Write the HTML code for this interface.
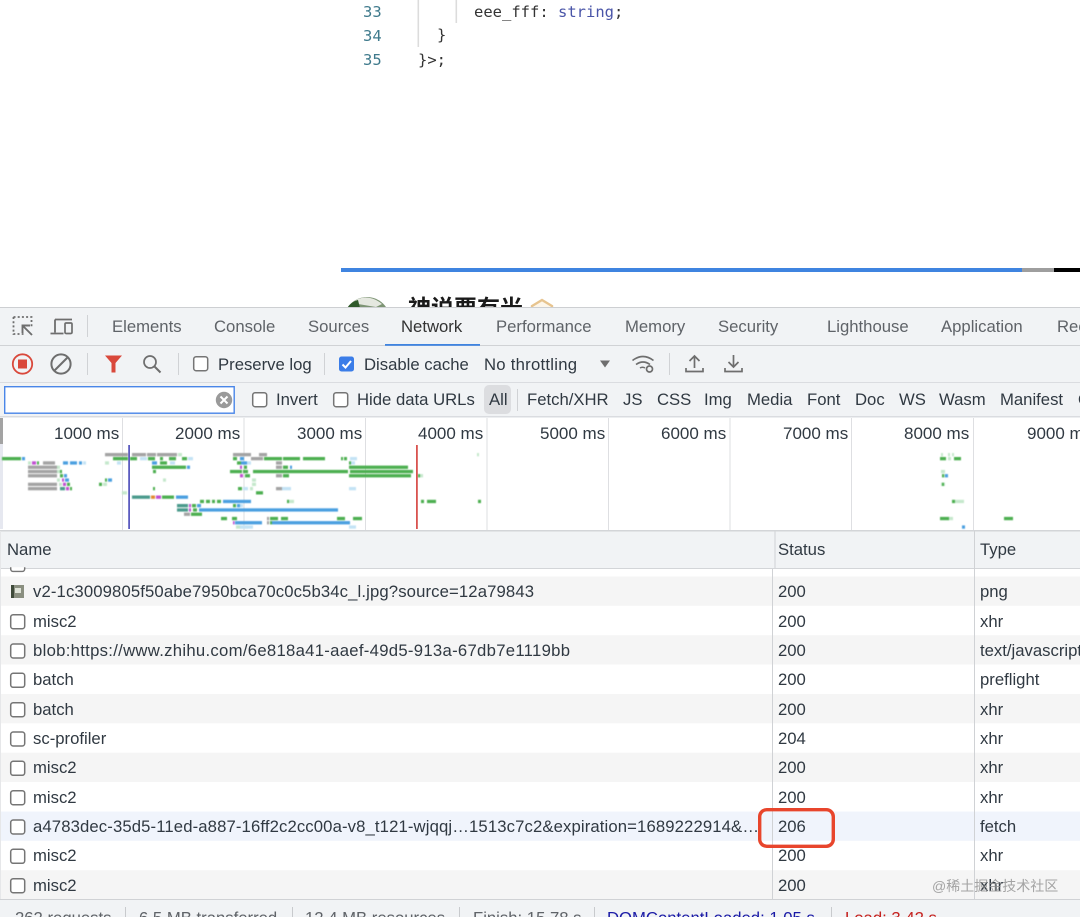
<!DOCTYPE html>
<html><head><meta charset="utf-8"><style>
html,body{margin:0;padding:0;background:#fff;width:1080px;height:917px;overflow:hidden}
svg{display:block}
text{font-family:"Liberation Sans","Noto Sans CJK SC",sans-serif;font-size:16.7px;fill:#303942}
.l{font-size:17px}
.m{font-family:"DejaVu Sans Mono","Liberation Mono",monospace;font-size:15.5px;fill:#333}
.n{font-family:"DejaVu Sans Mono","Liberation Mono",monospace;font-size:15.5px;fill:#3f7a8c}
.t{fill:#5f6368}
.g{fill:#4caf50}.b{fill:#4a9fe0}.y{fill:#a3a3a3}.p{fill:#c04fd0}.e{fill:#4a9a8c}.o{fill:#e08a30}
.lg{fill:#c5e8cc}.lb{fill:#c3e3f5}
.ic{fill:none;stroke:#6e6e6e;stroke-width:1.7}
.cb{fill:#fff;stroke:#757575;stroke-width:1.5}
</style></head><body>
<svg width="1080" height="917" viewBox="0 0 1080 917" xmlns="http://www.w3.org/2000/svg">
<rect width="1080" height="917" fill="#fff"/>
<!-- code -->
<rect x="417.5" y="0" width="1.6" height="47" fill="#dcdcdc"/>
<rect x="455.5" y="0" width="1.6" height="23" fill="#dcdcdc"/>
<text class="n" x="363" y="17">33</text>
<text class="n" x="363" y="41">34</text>
<text class="n" x="363" y="65">35</text>
<text class="m" x="474" y="17">eee_fff: <tspan fill="#4a55a8">string</tspan>;</text>
<text class="m" x="437" y="40">}</text>
<text class="m" x="418" y="65">}&gt;;</text>
<!-- progress -->
<rect x="341" y="268" width="681" height="4" fill="#3f84e0"/>
<rect x="1022" y="268" width="32" height="4" fill="#9e9e9e"/>
<rect x="1054" y="268" width="26" height="4" fill="#000"/>
<!-- article peek -->
<circle cx="367" cy="320" r="23" fill="#7d9474"/>
<path d="M352 303q8-7 18-5q6 1 12 6l-6 3l-12-2z" fill="#e5e8e0"/>
<path d="M347 308q5-7 11-8l2 8z" fill="#2f5a2a"/>
<text x="408" y="316" style="font-size:23px;font-weight:bold;fill:#1a1a1a">神说要有光</text>
<path d="M532 315v-9l10-6l10 6v9" fill="#fdf6ea" stroke="#e7c48f" stroke-width="2.4"/>
<!-- devtools chrome -->
<rect x="0" y="307" width="1080" height="110" fill="#f1f3f5"/>
<rect x="0" y="307" width="1080" height="1" fill="#cdcfd2"/>
<rect x="0" y="345" width="1080" height="1" fill="#d0d2d5"/>
<rect x="0" y="382" width="1080" height="1" fill="#dadce0"/>
<rect x="0" y="416" width="1080" height="1.5" fill="#dadce0"/>
<!-- tab icons -->
<path d="M13.5 317h18v10M13.5 317v17h10" fill="none" stroke="#6e6e6e" stroke-width="1.8" stroke-dasharray="2 2.2"/>
<path d="M32 335l-9-9M22.5 333v-7.5h7.5" fill="none" stroke="#6e6e6e" stroke-width="1.9"/>
<path d="M55 319.5h17M55 319.5v13M50.5 333.5h13" fill="none" stroke="#6e6e6e" stroke-width="1.8"/>
<rect x="65" y="323" width="7" height="10.5" rx="1.2" fill="#f1f3f5" stroke="#6e6e6e" stroke-width="1.7"/>
<rect x="87" y="315" width="1" height="22" fill="#d0d2d5"/>
<!-- tabs -->
<text class="t" x="112" y="332">Elements</text>
<text class="t" x="214" y="332">Console</text>
<text class="t" x="308" y="332">Sources</text>
<text x="401" y="332" style="fill:#333">Network</text>
<text class="t" x="496" y="332">Performance</text>
<text class="t" x="625" y="332">Memory</text>
<text class="t" x="718" y="332">Security</text>
<text class="t" x="827" y="332">Lighthouse</text>
<text class="t" x="941" y="332">Application</text>
<text class="t" x="1057" y="332">Recorder</text>
<rect x="385" y="344" width="95" height="1.8" fill="#3f84e0"/>
<!-- toolbar -->
<circle cx="22.5" cy="364" r="9.7" fill="none" stroke="#d9483b" stroke-width="1.8"/>
<rect x="18" y="359.5" width="9" height="9" fill="#d9483b"/>
<circle cx="61" cy="364" r="9.6" class="ic" style="stroke-width:2"/>
<path d="M54.500 370.500L67.500 357.500" class="ic" style="stroke-width:2"/>
<rect x="87" y="353" width="1" height="22" fill="#d0d2d5"/>
<path d="M105 355.500h17l-6.500 7.500v9.500h-4v-9.500z" fill="#d9483b"/>
<circle cx="150" cy="362" r="6" class="ic"/>
<path d="M154.500 366.500l6 6" class="ic" style="stroke-width:2"/>
<rect x="178" y="353" width="1" height="22" fill="#d0d2d5"/>
<rect x="193.700" y="356.700" width="14" height="14" rx="2.500" class="cb"/>
<text x="218" y="370">Preserve log</text>
<rect x="324" y="353" width="1" height="22" fill="#d0d2d5"/>
<rect x="339" y="356.500" width="15" height="15" rx="2.500" fill="#3b7de8"/>
<path d="M342.500 364.500l3 3l5.500-6.500" fill="none" stroke="#fff" stroke-width="2"/>
<text x="364" y="370">Disable cache</text>
<text x="484" y="370" textLength="93">No throttling</text>
<path d="M600 360.500h10l-5 7z" fill="#6e6e6e"/>
<path d="M632.500 360.500q10.500-8 21 0M636 364.500q7-5 14 0M640 368q2.500-1.500 5 0" fill="none" stroke="#6e6e6e" stroke-width="1.6"/>
<circle cx="649.500" cy="369" r="3" fill="#f1f3f5" stroke="#6e6e6e" stroke-width="1.7"/>
<rect x="669" y="353" width="1" height="22" fill="#d0d2d5"/>
<path d="M694.500 368v-12M689.500 361l5-5l5 5M686 368v3.500h17v-3.500" fill="none" stroke="#6e6e6e" stroke-width="1.7"/>
<path d="M733.500 355v12M728.500 362l5 5l5-5M725 368v3.500h17v-3.500" fill="none" stroke="#6e6e6e" stroke-width="1.7"/>
<!-- filter row -->
<rect x="4.700" y="386.700" width="229.500" height="26.500" fill="#fff" stroke="#4a86e8" stroke-width="1.400"/>
<circle cx="224" cy="400" r="8.200" fill="#9a9a9a"/>
<path d="M220.500 396.500l7 7M227.500 396.500l-7 7" stroke="#fff" stroke-width="2"/>
<rect x="252.700" y="392.700" width="14" height="14" rx="2.500" class="cb"/>
<text x="276" y="405">Invert</text>
<rect x="333.700" y="392.700" width="14" height="14" rx="2.500" class="cb"/>
<text x="357" y="405">Hide data URLs</text>
<rect x="484" y="385" width="27" height="29" rx="5" fill="#dcdde0"/>
<text x="489" y="405">All</text>
<rect x="517" y="389" width="1" height="22" fill="#d0d2d5"/>
<text x="527" y="405">Fetch/XHR</text>
<text x="623" y="405">JS</text>
<text x="657" y="405">CSS</text>
<text x="704" y="405">Img</text>
<text x="747" y="405">Media</text>
<text x="807" y="405">Font</text>
<text x="855" y="405">Doc</text>
<text x="899" y="405">WS</text>
<text x="939" y="405">Wasm</text>
<text x="1000" y="405">Manifest</text>
<text x="1078" y="405">Other</text>
<!-- overview -->
<rect x="0" y="418" width="1080" height="112" fill="#fff"/>
<rect x="0" y="418" width="3" height="26" fill="#a3a3a3"/>
<rect x="0" y="444" width="3" height="85" fill="#e6e8f0"/>
<g fill="#dedfe2">
<rect x="122" y="418" width="1" height="112"/><rect x="243.500" y="418" width="1" height="112"/><rect x="365" y="418" width="1" height="112"/><rect x="486.500" y="418" width="1" height="112"/><rect x="608" y="418" width="1" height="112"/><rect x="729.500" y="418" width="1" height="112"/><rect x="851" y="418" width="1" height="112"/><rect x="973" y="418" width="1" height="112"/>
</g>
<text class="l" x="54" y="439">1000 ms</text>
<text class="l" x="175" y="439">2000 ms</text>
<text class="l" x="297" y="439">3000 ms</text>
<text class="l" x="418" y="439">4000 ms</text>
<text class="l" x="540" y="439">5000 ms</text>
<text class="l" x="661" y="439">6000 ms</text>
<text class="l" x="783" y="439">7000 ms</text>
<text class="l" x="904" y="439">8000 ms</text>
<text class="l" x="1027" y="439">9000 ms</text>
<!-- waterfall bars -->
<g style="filter:blur(.5px)">
<g class="y">
<rect x="105" y="453" width="23" height="3.300"/><rect x="132" y="453" width="14" height="3.300"/><rect x="147" y="453" width="9" height="3.300"/><rect x="157" y="453" width="20" height="3.300"/><rect x="233" y="453" width="18" height="3.300"/><rect x="259" y="453" width="8" height="3.300"/><rect x="251" y="457" width="12" height="3.300"/>
<rect x="43" y="461.300" width="12" height="3.300"/><rect x="276" y="461.300" width="6" height="3.300"/>
<rect x="28" y="465.600" width="29" height="3.300"/><rect x="276" y="465.600" width="6" height="3.300"/>
<rect x="28" y="469.900" width="29" height="3.300"/>
<rect x="28" y="474.100" width="29" height="3.300"/><rect x="276" y="474.100" width="6" height="3.300"/>
<rect x="28" y="482.700" width="29" height="3.300"/>
<rect x="28" y="487" width="29" height="3.300"/><rect x="276" y="487" width="6" height="3.300"/>
<rect x="184" y="512.600" width="6" height="3.300"/><rect x="267" y="516.900" width="2" height="3.300"/><rect x="267" y="521.100" width="2" height="3.300"/>
</g>
<g class="lg">
<rect x="178" y="453" width="4" height="3.300"/><rect x="477" y="453" width="2" height="3.300"/><rect x="941" y="453" width="2" height="3.300"/><rect x="948" y="453" width="2" height="3.300"/><rect x="952" y="453" width="2" height="3.300"/>
<rect x="28" y="461.300" width="3" height="3.300"/><rect x="105" y="461.300" width="4" height="3.300"/><rect x="57" y="465.600" width="3" height="3.300"/><rect x="57" y="469.900" width="3" height="3.300"/><rect x="57" y="478.400" width="3" height="3.300"/><rect x="163" y="478.400" width="3" height="3.300"/><rect x="103" y="482.700" width="4" height="3.300"/><rect x="59" y="482.700" width="3" height="3.300"/>
<rect x="122" y="491.200" width="5" height="3.300"/><rect x="252" y="478.400" width="4" height="3.300"/><rect x="252" y="482.700" width="4" height="3.300"/><rect x="250" y="487" width="3" height="3.300"/><rect x="418" y="474.100" width="5" height="3.300"/><rect x="955" y="499.800" width="9" height="3.300"/><rect x="948" y="516.900" width="5" height="3.300"/><rect x="287" y="499.800" width="7" height="3.300"/><rect x="236" y="525.400" width="12" height="3.300"/><rect x="942" y="474.100" width="3" height="3.300"/><rect x="941" y="482.700" width="4" height="3.300"/><rect x="948" y="457" width="3" height="3.300"/><rect x="941" y="469.900" width="4" height="3.300"/>
</g>
<g class="lb">
<rect x="83" y="461.300" width="3" height="3.300"/><rect x="117" y="461.300" width="4" height="3.300"/><rect x="188" y="457" width="5" height="3.300"/><rect x="350" y="457" width="7" height="3.300"/><rect x="349" y="461.300" width="6" height="3.300"/><rect x="247" y="461.300" width="4" height="3.300"/><rect x="349" y="487" width="7" height="3.300"/><rect x="243" y="487" width="5" height="3.300"/><rect x="282" y="487" width="9" height="3.300"/><rect x="240" y="525.400" width="13" height="3.300"/><rect x="349" y="525.400" width="7" height="3.300"/><rect x="240" y="504" width="3" height="3.300"/><rect x="140" y="457" width="7" height="3.300"/><rect x="170" y="461.300" width="5" height="3.300"/>
</g>
<g class="g">
<rect x="2" y="457" width="19" height="3.300"/><rect x="113" y="457" width="15" height="3.300"/><rect x="130" y="457" width="7" height="3.300"/><rect x="148" y="457" width="7" height="3.300"/><rect x="160" y="457" width="3" height="3.300"/><rect x="169" y="457" width="7" height="3.300"/><rect x="182" y="457" width="5" height="3.300"/><rect x="233" y="457" width="4" height="3.300"/><rect x="264" y="457" width="18" height="3.300"/><rect x="283" y="457" width="17" height="3.300"/><rect x="303" y="457" width="22" height="3.300"/><rect x="341" y="457" width="2" height="3.300"/><rect x="344" y="457" width="3" height="3.300"/><rect x="940" y="457" width="6" height="3.300"/><rect x="954" y="457" width="7" height="3.300"/>
<rect x="37" y="461.300" width="2" height="3.300"/><rect x="160" y="461.300" width="7" height="3.300"/><rect x="237" y="461.300" width="4" height="3.300"/><rect x="349" y="461.300" width="2" height="3.300"/>
<rect x="152" y="465.600" width="34" height="3.300"/><rect x="244" y="465.600" width="3" height="3.300"/><rect x="283" y="465.600" width="5" height="3.300"/><rect x="349" y="465.600" width="59" height="3.300"/>
<rect x="60" y="469.900" width="2" height="3.300"/><rect x="153" y="469.900" width="3" height="3.300"/><rect x="230" y="469.900" width="12" height="3.300"/><rect x="243" y="469.900" width="5" height="3.300"/><rect x="253" y="469.900" width="95" height="3.300"/><rect x="350" y="469.900" width="63" height="3.300"/>
<rect x="60" y="474.100" width="3" height="3.300"/><rect x="245" y="474.100" width="5" height="3.300"/><rect x="283" y="474.100" width="6" height="3.300"/><rect x="349" y="474.100" width="62" height="3.300"/><rect x="418" y="474.100" width="2" height="3.300"/><rect x="942" y="474.100" width="2" height="3.300"/>
<rect x="105" y="478.400" width="2" height="3.300"/><rect x="99" y="482.700" width="3" height="3.300"/><rect x="67" y="482.700" width="3" height="3.300"/><rect x="942" y="482.700" width="2" height="3.300"/>
<rect x="70" y="487" width="2" height="3.300"/><rect x="153" y="487" width="2" height="3.300"/><rect x="238" y="487" width="4" height="3.300"/>
<rect x="256" y="491.200" width="7" height="3.300"/>
<rect x="162" y="495.500" width="12" height="3.300"/><rect x="200" y="499.800" width="4" height="3.300"/><rect x="206" y="499.800" width="4" height="3.300"/><rect x="212" y="499.800" width="3" height="3.300"/><rect x="217" y="499.800" width="4" height="3.300"/><rect x="287" y="499.800" width="2" height="3.300"/><rect x="421" y="499.800" width="3" height="3.300"/><rect x="427" y="499.800" width="9" height="3.300"/><rect x="478" y="499.800" width="3" height="3.300"/><rect x="952" y="499.800" width="3" height="3.300"/>
<rect x="192" y="504" width="4" height="3.300"/><rect x="233" y="504" width="3" height="3.300"/>
<rect x="193" y="508.300" width="4" height="3.300"/><rect x="191" y="512.600" width="11" height="3.300"/>
<rect x="221" y="516.900" width="6" height="3.300"/><rect x="232" y="516.900" width="5" height="3.300"/><rect x="270" y="516.900" width="8" height="3.300"/><rect x="281" y="516.900" width="7" height="3.300"/><rect x="337" y="516.900" width="8" height="3.300"/><rect x="353" y="516.900" width="9" height="3.300"/><rect x="940" y="516.900" width="9" height="3.300"/><rect x="1004" y="516.900" width="9" height="3.300"/><rect x="270" y="521.100" width="2" height="3.300"/>
</g>
<g class="b">
<rect x="22" y="457" width="3" height="3.300"/><rect x="240" y="457" width="4" height="3.300"/><rect x="63" y="461.300" width="5" height="3.300"/><rect x="70" y="461.300" width="7" height="3.300"/><rect x="79" y="461.300" width="3" height="3.300"/><rect x="152" y="461.300" width="5" height="3.300"/><rect x="241" y="461.300" width="6" height="3.300"/>
<rect x="187" y="465.600" width="3" height="3.300"/><rect x="290" y="465.600" width="2" height="3.300"/><rect x="64" y="474.100" width="3" height="3.300"/><rect x="945" y="474.100" width="3" height="3.300"/><rect x="65" y="478.400" width="4" height="3.300"/><rect x="108" y="478.400" width="4" height="3.300"/>
<rect x="176" y="495.500" width="12" height="3.300"/><rect x="223" y="499.800" width="28" height="3.300"/><rect x="197" y="504" width="4" height="3.300"/><rect x="237" y="504" width="3" height="3.300"/><rect x="199" y="508.300" width="139" height="3.300"/><rect x="235" y="521.100" width="27" height="3.300"/><rect x="272" y="521.100" width="78" height="3.300"/><rect x="962" y="525.400" width="3" height="3.300"/>
</g>
<g class="e"><rect x="60" y="487" width="5" height="3.300"/><rect x="132" y="495.500" width="18" height="3.300"/><rect x="177" y="504" width="11" height="3.300"/><rect x="177" y="508.300" width="11" height="3.300"/></g>
<g class="p"><rect x="32" y="461.300" width="4" height="3.300"/><rect x="240" y="465.600" width="2" height="3.300"/><rect x="240" y="474.100" width="3" height="3.300"/><rect x="62" y="478.400" width="2" height="3.300"/><rect x="63" y="482.700" width="3" height="3.300"/><rect x="66" y="487" width="3" height="3.300"/><rect x="156" y="495.500" width="5" height="3.300"/><rect x="189" y="504" width="2" height="3.300"/><rect x="189" y="508.300" width="2" height="3.300"/><rect x="233" y="521.100" width="1.500" height="3.300"/></g>
<g class="o"><rect x="151" y="495.500" width="4" height="3.300"/></g>
</g>
<rect x="128.200" y="445" width="1.800" height="84" fill="#5b5bc0"/>
<rect x="416" y="445" width="1.800" height="84" fill="#d9534f"/>
<!-- table -->
<rect x="0" y="530" width="1080" height="1.500" fill="#d3d5d8"/>
<rect x="0" y="531.500" width="1080" height="36.500" fill="#f1f3f5"/>
<rect x="0" y="568" width="1080" height="1" fill="#d3d5d8"/>
<text x="7" y="555">Name</text><text x="778" y="555">Status</text><text x="980" y="555">Type</text>
<rect x="0" y="576.500" width="1080" height="29.300" fill="#f5f5f5"/>
<rect x="0" y="635.200" width="1080" height="29.300" fill="#f5f5f5"/>
<rect x="0" y="694" width="1080" height="29.300" fill="#f5f5f5"/>
<rect x="0" y="752.700" width="1080" height="29.300" fill="#f5f5f5"/>
<rect x="0" y="811.500" width="1080" height="29.300" fill="#f0f4fc"/>
<rect x="0" y="870.200" width="1080" height="29" fill="#f5f5f5"/>
<rect x="0" y="531" width="1" height="368" fill="#e6e7e9"/>
<rect x="774.500" y="531.500" width="1" height="36.500" fill="#d0d2d5"/>
<rect x="772" y="569" width="1" height="330" fill="#d0d2d5"/>
<rect x="974" y="531" width="1" height="368" fill="#d0d2d5"/>
<!-- row icons -->
<rect x="10.700" y="560" width="14" height="11.500" rx="2.500" class="cb" style="clip-path:inset(8px 0 0 0)"/>
<rect x="11" y="585" width="13" height="13" fill="#8a8f80"/><rect x="15" y="588" width="6" height="5" fill="#dfe3d8"/><rect x="11" y="585" width="3" height="13" fill="#3f4a3a"/>
<g class="cb">
<rect x="10.700" y="614.700" width="14" height="14" rx="2.500"/>
<rect x="10.700" y="644" width="14" height="14" rx="2.500"/>
<rect x="10.700" y="673.300" width="14" height="14" rx="2.500"/>
<rect x="10.700" y="702.700" width="14" height="14" rx="2.500"/>
<rect x="10.700" y="732" width="14" height="14" rx="2.500"/>
<rect x="10.700" y="761.300" width="14" height="14" rx="2.500"/>
<rect x="10.700" y="790.700" width="14" height="14" rx="2.500"/>
<rect x="10.700" y="820" width="14" height="14" rx="2.500"/>
<rect x="10.700" y="849.300" width="14" height="14" rx="2.500"/>
<rect x="10.700" y="878.700" width="14" height="14" rx="2.500"/>
</g>
<text x="33" y="597" textLength="501">v2-1c3009805f50abe7950bca70c0c5b34c_l.jpg?source=12a79843</text><text x="778" y="597">200</text><text x="980" y="597">png</text>
<text x="33" y="627">misc2</text><text x="778" y="627">200</text><text x="980" y="627">xhr</text>
<text x="33" y="656" textLength="537">blob:https://www.zhihu.com/6e818a41-aaef-49d5-913a-67db7e1119bb</text><text x="778" y="656">200</text><text x="980" y="656">text/javascript</text>
<text x="33" y="685">batch</text><text x="778" y="685">200</text><text x="980" y="685">preflight</text>
<text x="33" y="715">batch</text><text x="778" y="715">200</text><text x="980" y="715">xhr</text>
<text x="33" y="744">sc-profiler</text><text x="778" y="744">204</text><text x="980" y="744">xhr</text>
<text x="33" y="773">misc2</text><text x="778" y="773">200</text><text x="980" y="773">xhr</text>
<text x="33" y="803">misc2</text><text x="778" y="803">200</text><text x="980" y="803">xhr</text>
<text x="33" y="832" textLength="726">a4783dec-35d5-11ed-a887-16ff2c2cc00a-v8_t121-wjqqj…1513c7c2&amp;expiration=1689222914&amp;…</text><text x="778" y="832">206</text><text x="980" y="832">fetch</text>
<text x="33" y="861">misc2</text><text x="778" y="861">200</text><text x="980" y="861">xhr</text>
<text x="33" y="891">misc2</text><text x="778" y="891">200</text><text x="980" y="891">xhr</text>
<!-- footer -->
<rect x="0" y="899" width="1080" height="18" fill="#f1f3f5"/>
<rect x="0" y="899" width="1080" height="1" fill="#d0d2d5"/>
<g fill="#c8cacd"><rect x="125" y="907" width="1" height="10"/><rect x="292" y="907" width="1" height="10"/><rect x="459" y="907" width="1" height="10"/><rect x="594" y="907" width="1" height="10"/><rect x="831" y="907" width="1" height="10"/></g>
<text class="t" x="15" y="923.500">262 requests</text>
<text class="t" x="139" y="923.500">6.5 MB transferred</text>
<text class="t" x="305" y="923.500">12.4 MB resources</text>
<text class="t" x="473" y="923.500">Finish: 15.78 s</text>
<text x="607" y="923.500" style="fill:#1a1aa6">DOMContentLoaded: 1.05 s</text>
<text x="845" y="923.500" style="fill:#c5221f">Load: 3.42 s</text>
<!-- annotation -->
<rect x="759.700" y="809.700" width="73.600" height="36.600" rx="7" fill="none" stroke="#e8452c" stroke-width="3.400"/>
<!-- watermark -->
<text x="932" y="891" style="font-size:14px;fill:#8f8f8f;fill-opacity:.8">@稀土掘金技术社区</text>
</svg>
</body></html>
